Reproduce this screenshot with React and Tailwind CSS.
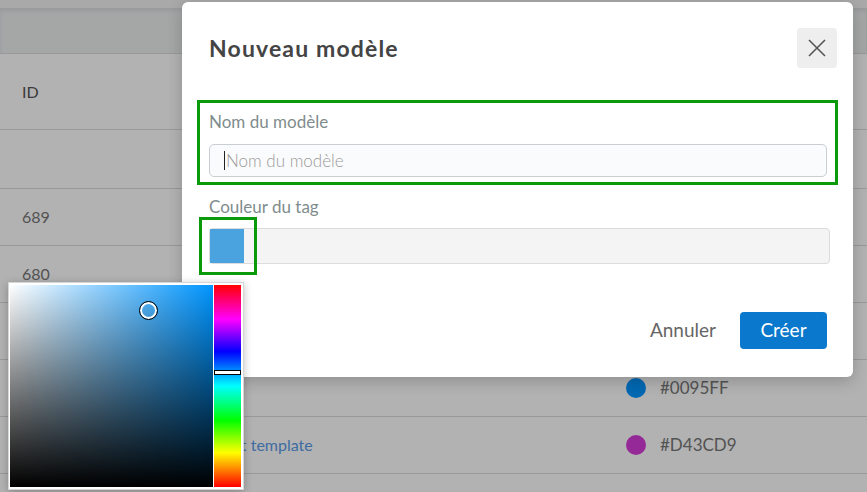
import React from 'react';

const rows = [
  { id: '', name: '', color: null },
  { id: '689', name: '', color: null },
  { id: '680', name: '', color: null },
  { id: '', name: '', color: null },
  { id: '', name: '', color: { hex: '#0095FF' } },
  { id: '', name: 'Test template', color: { hex: '#D43CD9' } },
  { id: '', name: '', color: null },
];

const CloseIcon = () => (
  <svg width="18" height="18" viewBox="0 0 18 18" fill="none" stroke="#555" strokeWidth="1.6">
    <path d="M1 1 L17 17 M17 1 L1 17" />
  </svg>
);

const ColorPicker = () => (
  <div className="absolute left-[8px] top-[282px] z-20 flex h-[208px] w-[236px] gap-px border border-[#d6d6d6] bg-white p-px pt-[2px] shadow-[0_2px_8px_rgba(0,0,0,0.25)]">
    {/* zone saturation / luminosité */}
    <div className="relative h-[202px] w-[203px] bg-[hsl(205,100%,50%)]">
      <div className="absolute inset-0 bg-gradient-to-r from-white to-transparent" />
      <div className="absolute inset-0 bg-gradient-to-b from-transparent to-black" />
      <div className="absolute left-[130px] top-[17px] h-[17px] w-[17px] rounded-full border-2 border-white outline outline-1 outline-black" />
    </div>
    {/* barre de teinte */}
    <div className="relative h-[202px] w-[27px] bg-[linear-gradient(to_bottom,#ff0000_0%,#ff00ff_17%,#0000ff_33%,#00ffff_50%,#00ff00_67%,#ffff00_83%,#ff0000_100%)]">
      <div className="absolute left-0 right-0 top-[85px] h-[5px] border border-black bg-white" />
    </div>
  </div>
);

const Modal = () => (
  <div className="absolute left-[182px] top-[2px] z-10 flex h-[375px] w-[671px] flex-col rounded-md bg-white shadow-[0_4px_16px_rgba(0,0,0,0.2)]">
    {/* En-tête */}
    <div className="mt-[26px] flex h-[40px] items-center justify-between pl-[27px] pr-[16px]">
      <h2 className="text-[23px] font-bold tracking-[0.05em] text-[#444]">Nouveau modèle</h2>
      <button className="flex h-[40px] w-[40px] items-center justify-center rounded bg-[#eeeeee]">
        <CloseIcon />
      </button>
    </div>

    {/* Champ nom */}
    <div className="ml-[15px] mt-[32px] w-[641px] border-[3px] border-[#0a9a0a] pb-[5px] pl-[9px] pr-[8px] pt-[9px]">
      <label className="block text-[17px] leading-[20px] text-[#7f8c8d]">Nom du modèle</label>
      <div className="relative mt-[12px]">
        <input
          className="h-[33px] w-[618px] rounded-[5px] border border-[#c9ced3] bg-[#fafbfc] px-[16px] text-[17px] font-light text-[#333] placeholder:text-[#9a9a9a] outline-none"
          placeholder="Nom du modèle"
        />
        <span className="absolute left-[15px] top-[7px] h-[19px] w-px bg-[#222]" />
      </div>
    </div>

    {/* Couleur du tag */}
    <div className="ml-[27px] mt-[12px]">
      <label className="block text-[17px] leading-[20px] text-[#7f8c8d]">Couleur du tag</label>
      <div className="relative mt-[11px] flex h-[36px] w-[621px] items-center rounded-[4px] border border-[#dcdcdc] bg-[#f4f4f4]">
        <div className="h-[34px] w-[34px] bg-[#4aa3df]" />
        <div className="absolute left-[-11px] top-[-12px] h-[58px] w-[58px] border-[3px] border-[#0a9a0a]" />
      </div>
    </div>

    {/* Actions */}
    <div className="mb-[28px] mt-auto flex items-center justify-end gap-[24px] pr-[26px]">
      <button className="text-[19px] text-[#666]">Annuler</button>
      <button className="h-[37px] w-[87px] rounded-[4px] bg-[#0a78cc] text-[19px] text-white">Créer</button>
    </div>
  </div>
);

export default function App() {
  return (
    <div className="relative h-[492px] w-[867px] overflow-hidden bg-white font-['Lato','Liberation_Sans',sans-serif]">
      {/* Tableau en arrière-plan */}
      <div className="h-[8px] bg-[#f3f3f3]" />
      <div className="h-[46px] border-b border-[#dcdcdc] bg-[#eceff0] shadow-[inset_0_3px_4px_rgba(0,0,0,0.08)]" />
      <div className="flex h-[76px] items-center border-b border-[#dcdcdc] pl-[22px] text-[16px] text-[#555]">ID</div>
      {rows.map((r, i) => (
        <div
          key={i}
          className={`flex items-center border-b border-[#dcdcdc] text-[16px] text-[#777] ${i === 0 ? 'h-[59px]' : 'h-[57px]'}`}
        >
          <div className="w-[218px] pl-[22px]">{r.id}</div>
          <div className="w-[408px] text-[#5a9bea]">{r.name}</div>
          {r.color && (
            <div className="flex items-center gap-[14px]">
              <span className="h-[20px] w-[20px] rounded-full" style={{ backgroundColor: r.color.hex }} />
              <span className="text-[17px]">{r.color.hex}</span>
            </div>
          )}
        </div>
      ))}

      {/* Voile */}
      <div className="absolute inset-0 bg-black/30" />

      <Modal />
      <ColorPicker />
    </div>
  );
}
